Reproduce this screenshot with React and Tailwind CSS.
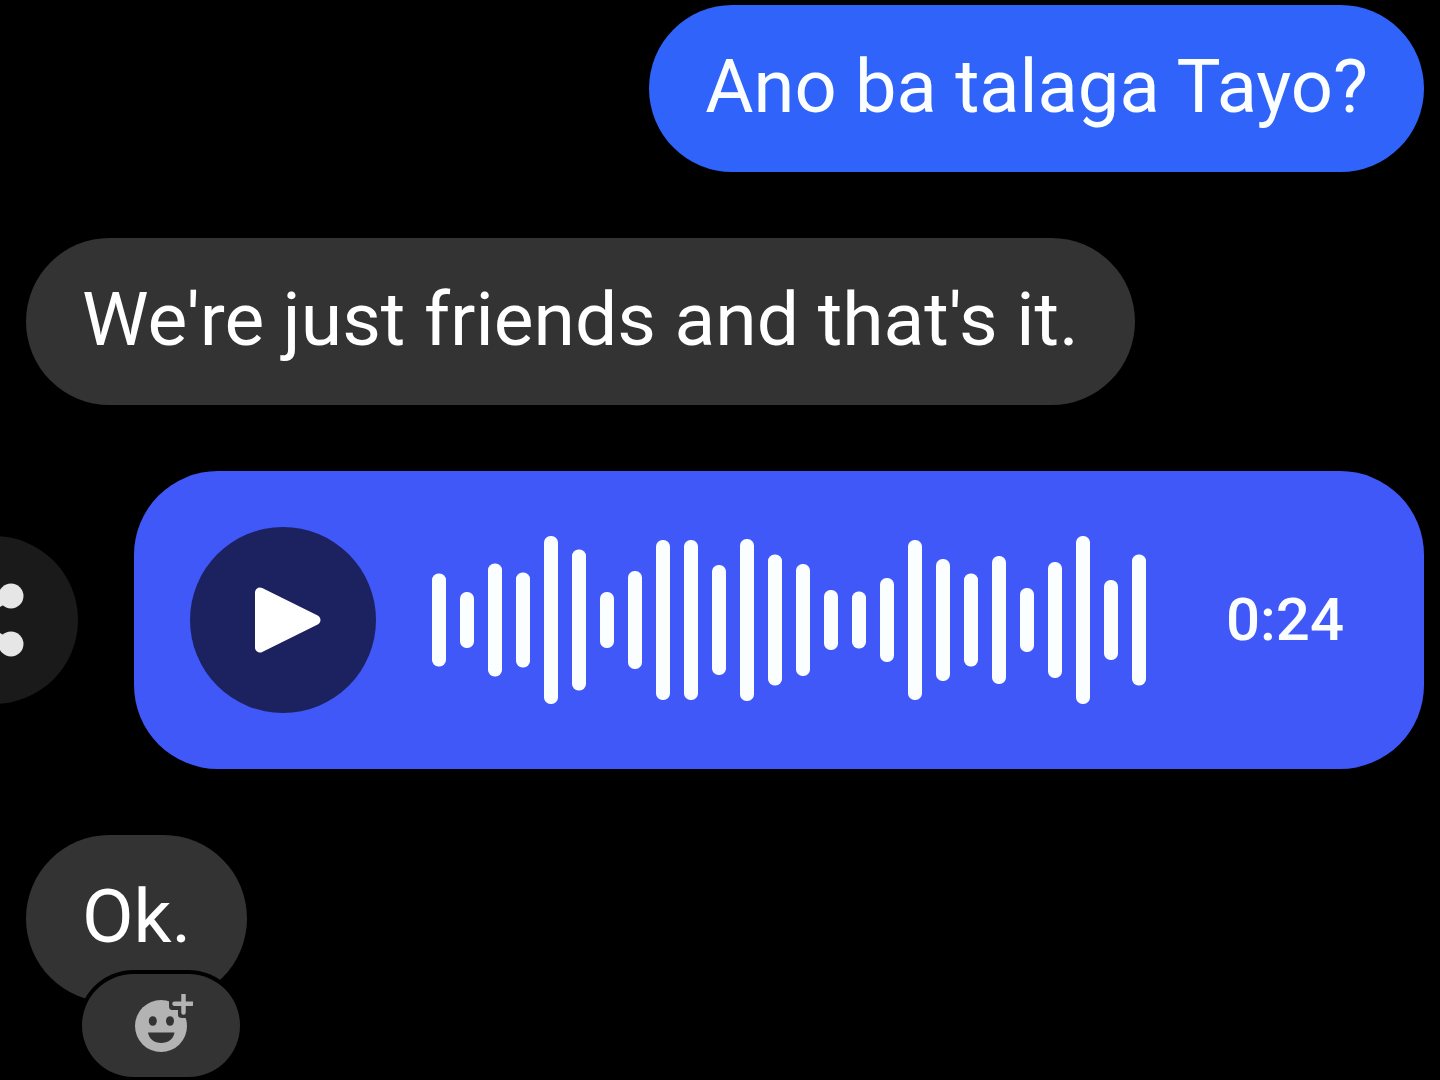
const WAVE_LEVELS = [
    93, 56, 113, 95, 168, 141, 56, 98, 160, 160, 110, 162, 131,
    112, 60, 57, 84, 160, 122, 93, 128, 64, 116, 168, 80, 131,
];

const BAR_WIDTH = 14;
const BAR_STEP = 28;
const WAVE_HEIGHT = 168;

const Waveform = () => {
    const width = WAVE_LEVELS.length * BAR_STEP - BAR_WIDTH;

    return (
        <svg
          width={width}
          height={WAVE_HEIGHT}
          viewBox={`0 0 ${width} ${WAVE_HEIGHT}`}
          className="shrink-0 fill-[#fbfeff]"
          aria-hidden="true"
        >
            {WAVE_LEVELS.map((level, i) => (
                <rect
                  key={i}
                  x={i * BAR_STEP}
                  y={(WAVE_HEIGHT - level) / 2}
                  width={BAR_WIDTH}
                  height={level}
                  rx="6.5"
                />
            ))}
        </svg>
    );
};

const ShareIcon = () => (
    <svg width="80" height="80" viewBox="-4 -4 80 80" className="shrink-0" aria-hidden="true">
        <path d="M53 12 L12 36 L53 60" fill="none" stroke="#e6e6e6" strokeWidth="8" />
        <circle cx="53" cy="12" r="12.5" fill="#e6e6e6" />
        <circle cx="12" cy="36" r="12.5" fill="#e6e6e6" />
        <circle cx="53" cy="60" r="12.5" fill="#e6e6e6" />
    </svg>
);

const PlayIcon = () => (
    <svg width="80" height="80" viewBox="0 0 80 80" aria-hidden="true">
        <path
          d="M17 12.5 L72.5 40 L17 67.5 Z"
          fill="#fff"
          stroke="#fff"
          strokeWidth="10"
          strokeLinejoin="round"
        />
    </svg>
);

const AddReactionIcon = () => (
    <svg width="64" height="64" viewBox="0 0 64 64" aria-hidden="true">
        <circle cx="32" cy="32" r="26" fill="#b3b3b3" />
        <ellipse cx="23.8" cy="27" rx="4" ry="4.8" fill="#333" />
        <ellipse cx="41" cy="27" rx="4" ry="4.8" fill="#333" />
        <path d="M19 38.5 H45.5 C44.5 45 39 49 32.2 49 C25.5 49 20 45 19 38.5 Z" fill="#333" />
        {/* gap between the face and the plus */}
        <path d="M40 0 H64 V24 H53 Q49 24 49 21 V16 H43 Q40 16 40 12 Z" fill="#333" />
        <path
          d="M54.5 1 V18.5 M45.5 9.7 H63"
          stroke="#b3b3b3"
          strokeWidth="4.5"
          strokeLinecap="round"
        />
    </svg>
);

const Bubble = ({ mine, children }) => (
    <p
      className={`w-fit rounded-[84px] px-14 pt-9 pb-10 leading-[91px] ${
        mine
          ? "self-end bg-[#3063f9] text-[74px] text-[#fbfeff]"
          : "self-start bg-[#333333] text-[75px] text-white"
      }`}
    >
        {children}
    </p>
);

const VoiceMessage = ({ duration }) => (
    <div className="flex items-center justify-end gap-14">
        <button
          type="button"
          aria-label="Share"
          className="flex size-[168px] shrink-0 items-center justify-center rounded-full bg-[#1a1a1a]"
        >
            <ShareIcon />
        </button>
        <div className="flex shrink-0 items-center rounded-[84px] bg-[#4158f8] py-14 pr-20 pl-14">
            <button
              type="button"
              aria-label="Play voice message"
              className="mr-14 flex size-[186px] shrink-0 items-center justify-center rounded-full bg-[#1c2260]"
            >
                <PlayIcon />
            </button>
            <Waveform />
            <span className="ml-20 text-[60px] leading-none font-medium text-[#fbfeff]">
                {duration}
            </span>
        </div>
    </div>
);

const App = () => {
    return (
        <main className="flex min-h-screen w-full flex-col gap-[66px] overflow-hidden bg-black pt-[5px] pr-4 pl-[26px] font-[Roboto,sans-serif]">
            <Bubble mine>Ano ba talaga Tayo?</Bubble>
            <Bubble>We're just friends and that's it.</Bubble>
            <VoiceMessage duration="0:24" />
            <div className="flex flex-col items-start">
                <Bubble>Ok.</Bubble>
                <button
                  type="button"
                  aria-label="Add reaction"
                  className="-mt-7 ml-14 flex h-[103px] w-[158px] items-center justify-center rounded-full bg-[#333333] ring-4 ring-black"
                >
                    <AddReactionIcon />
                </button>
            </div>
        </main>
    );
};

export default App;
